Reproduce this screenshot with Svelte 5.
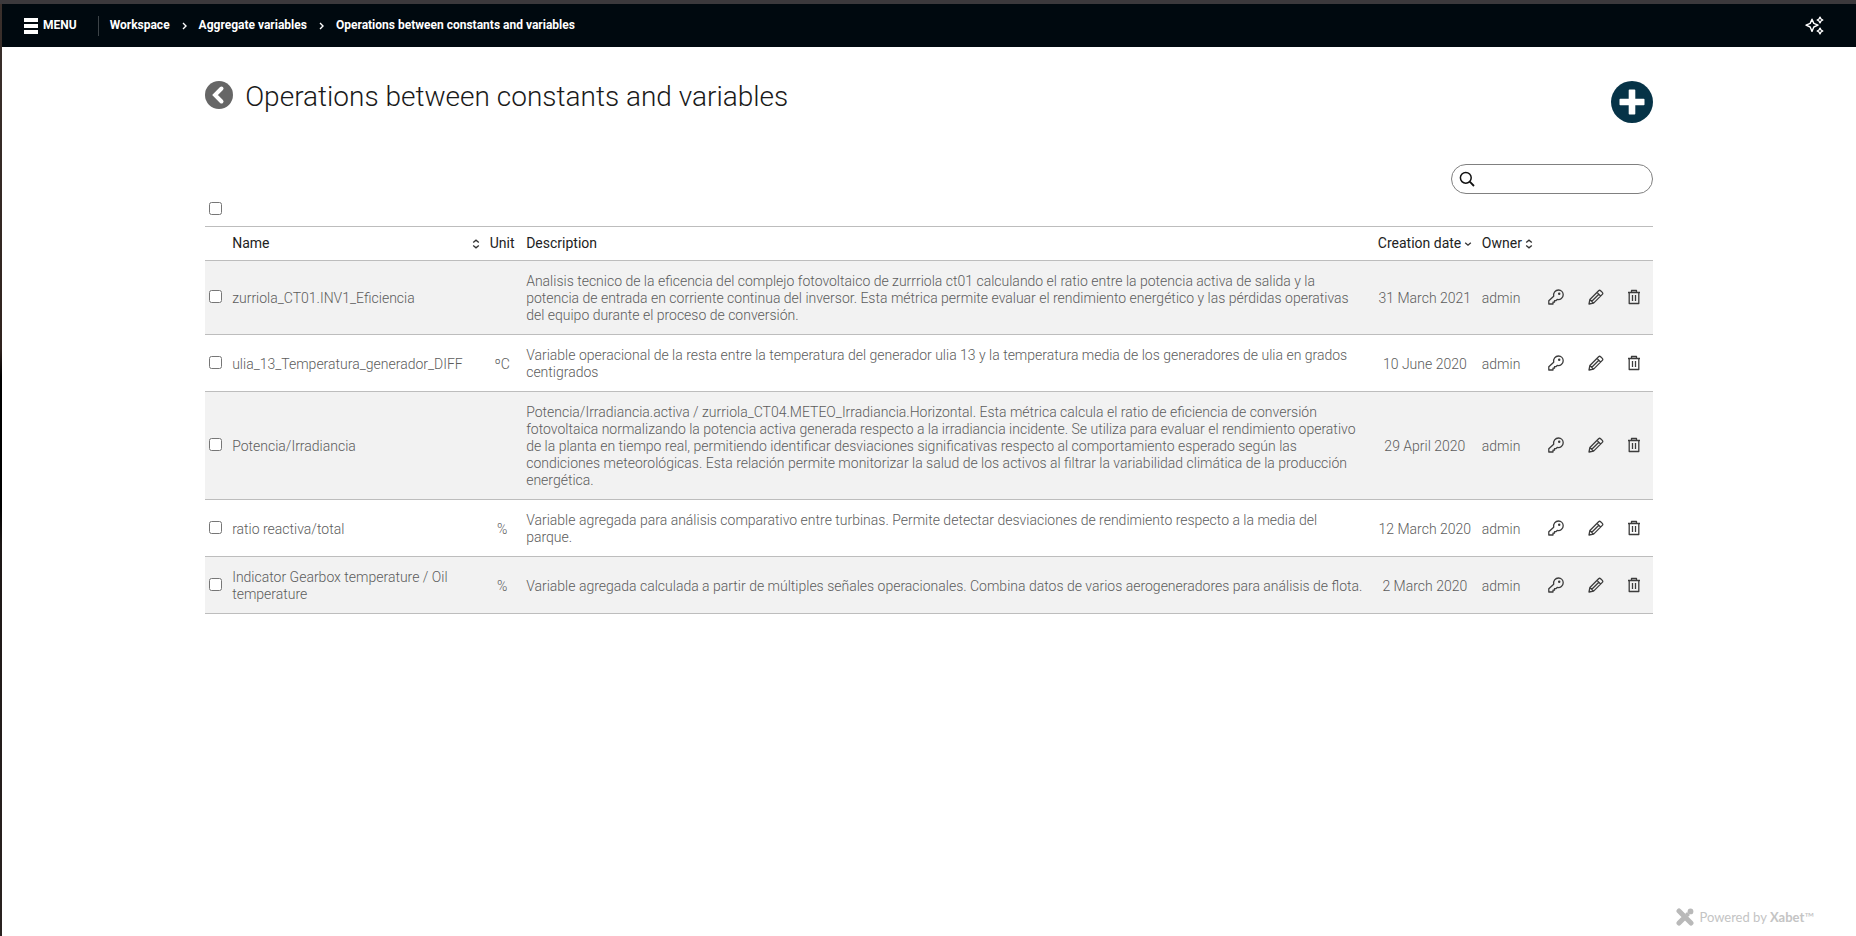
<script>
  const crumbs = ['Workspace', 'Aggregate variables', 'Operations between constants and variables'];
  const rows = [
    {
      name: 'zurriola_CT01.INV1_Eficiencia',
      unit: '',
      description:
        'Analisis tecnico de la eficencia del complejo fotovoltaico de zurrriola ct01 calculando el ratio entre la potencia activa de salida y la potencia de entrada en corriente continua del inversor. Esta métrica permite evaluar el rendimiento energético y las pérdidas operativas del equipo durante el proceso de conversión.',
      date: '31 March 2021',
      owner: 'admin'
    },
    {
      name: 'ulia_13_Temperatura_generador_DIFF',
      unit: 'ºC',
      description:
        'Variable operacional de la resta entre la temperatura del generador ulia 13 y la temperatura media de los generadores de ulia en grados centigrados',
      date: '10 June 2020',
      owner: 'admin'
    },
    {
      name: 'Potencia/Irradiancia',
      unit: '',
      description:
        'Potencia/Irradiancia.activa / zurriola_CT04.METEO_Irradiancia.Horizontal. Esta métrica calcula el ratio de eficiencia de conversión fotovoltaica normalizando la potencia activa generada respecto a la irradiancia incidente. Se utiliza para evaluar el rendimiento operativo de la planta en tiempo real, permitiendo identificar desviaciones significativas respecto al comportamiento esperado según las condiciones meteorológicas. Esta relación permite monitorizar la salud de los activos al filtrar la variabilidad climática de la producción energética.',
      date: '29 April 2020',
      owner: 'admin'
    },
    {
      name: 'ratio reactiva/total',
      unit: '%',
      description:
        'Variable agregada para análisis comparativo entre turbinas. Permite detectar desviaciones de rendimiento respecto a la media del parque.',
      date: '12 March 2020',
      owner: 'admin'
    },
    {
      name: 'Indicator Gearbox temperature / Oil temperature',
      unit: '%',
      description:
        'Variable agregada calculada a partir de múltiples señales operacionales. Combina datos de varios aerogeneradores para análisis de flota.',
      date: '2 March 2020',
      owner: 'admin'
    }
  ];
  let selected = $state(rows.map(() => false));
  let query = $state('');
  let all = $derived(selected.every(Boolean));
  function toggleAll(e) {
    selected = rows.map(() => e.currentTarget.checked);
  }
</script>

{#snippet sorter()}
  <svg class="sort" width="8" height="10" viewBox="0 0 8 10" aria-hidden="true"><path d="M1.2 3.6 4 1.2l2.8 2.4M1.2 6.4 4 8.8l2.8-2.4" /></svg>
{/snippet}

<div class="page">
  <header>
    <button class="menu">
      <svg width="14" height="16" viewBox="0 0 14 16" aria-hidden="true"><path d="M0 0h14v4H0zM0 6h14v4H0zM0 12h14v4H0z" fill="#fff" /></svg>
      MENU
    </button>
    <nav>
      {#each crumbs as crumb, i}
        {#if i > 0}
          <svg width="5" height="8" viewBox="0 0 5 8" aria-hidden="true"><path d="m1 1 3 3-3 3" fill="none" stroke="#fff" stroke-width="1.4" /></svg>
        {/if}
        <a href="#{i}">{crumb}</a>
      {/each}
    </nav>
    <button class="assistant" aria-label="Assistant">
      <svg width="19" height="19" viewBox="0 0 19 19" fill="none" stroke="#fff" stroke-width="1.4" stroke-linejoin="round" aria-hidden="true">
        <path d="M7 3.2 8.8 7.4 13 9.2 8.8 11 7 15.4 5.2 11 1 9.2l4.2-1.8z" />
        <path d="m15 1.2 1 1.8 1.8 1-1.8 1-1 1.8-1-1.8-1.8-1 1.8-1zM15 12.2l1 1.8 1.8 1-1.8 1-1 1.8-1-1.8-1.8-1 1.8-1z" />
      </svg>
    </button>
  </header>

  <main>
    <div class="heading">
      <a class="back" href="#back" aria-label="Back">
        <svg width="28" height="28" viewBox="0 0 28 28" aria-hidden="true"><circle cx="14" cy="14" r="14" fill="#666" /><path d="m16.5 7.500-6.500 6.500 6.500 6.500" fill="none" stroke="#fff" stroke-width="4" stroke-linecap="round" stroke-linejoin="miter" /></svg>
      </a>
      <h1>Operations between constants and variables</h1>
      <button class="add" aria-label="Add">
        <svg width="42" height="42" viewBox="0 0 42 42" aria-hidden="true"><circle cx="21" cy="21" r="21" fill="#063347" /><path d="M18.5 8.500h5q.8 0 .8.8v8.400h8.400q.8 0 .8.8v5q0 .8-.8.8h-8.400v8.400q0 .8-.8.8h-5q-.8 0-.8-.8v-8.400H9.300q-.8 0-.8-.8v-5q0-.8.8-.8h8.400V9.300q0-.8.8-.8z" fill="#fff" /></svg>
      </button>
    </div>

    <label class="search">
      <svg width="16" height="16" viewBox="0 0 16 16" fill="none" stroke="#111" stroke-width="1.5" aria-hidden="true"><circle cx="6.8" cy="6.8" r="5.4" /><path d="m10.700 10.700 4.300 4.300" stroke-width="1.8" /></svg>
      <input type="search" aria-label="Search" bind:value={query} />
    </label>

    <div class="select-all"><input type="checkbox" aria-label="Select all" checked={all} onchange={toggleAll} /></div>

    <table>
      <colgroup>
        <col class="c-check" /><col class="c-name" /><col class="c-unit" /><col /><col class="c-date" /><col class="c-owner" /><col class="c-action" /><col class="c-action" /><col class="c-last" />
      </colgroup>
      <thead>
        <tr>
          <th></th>
          <th><span class="spread">Name {@render sorter()}</span></th>
          <th class="center">Unit</th>
          <th>Description</th>
          <th><span class="inline">Creation date <svg class="sort" width="8" height="6" viewBox="0 0 8 6" aria-hidden="true"><path d="m1.2 1.8 2.8 2.4 2.8-2.4" /></svg></span></th>
          <th><span class="inline">Owner {@render sorter()}</span></th>
          <th></th><th></th><th></th>
        </tr>
      </thead>
      <tbody>
        {#each rows as row, i}
          <tr>
            <td class="check"><input type="checkbox" aria-label="Select {row.name}" bind:checked={selected[i]} /></td>
            <td class="name">{row.name}</td>
            <td class="center">{row.unit}</td>
            <td class="description">{row.description}</td>
            <td class="date">{row.date}</td>
            <td>{row.owner}</td>
            <td class="action">
              <button aria-label="Permissions">
                <svg width="16" height="16" viewBox="0 0 16 16" aria-hidden="true"><path d="M.8 15v-3.200l4.900-4.600C5 3.900 7.300 1 10.500 1c2.700 0 4.700 2 4.700 4.700 0 3.200-2.800 5.400-6 4.700L7.900 11.700H6.500v1.500H5V15z" /><circle cx="11.200" cy="4.800" r=".6" /></svg>
              </button>
            </td>
            <td class="action">
              <button aria-label="Edit">
                <svg width="16" height="16" viewBox="0 0 16 16" aria-hidden="true"><path d="m1 15 .9-4.500 8.700-8.700q1-1 2-.1l1.700 1.700q1 1 0 2l-8.700 8.700zM1.900 10.500l3.700 3.600M9 3.400 12.600 7M3.800 12.200l7-7" /></svg>
              </button>
            </td>
            <td class="action">
              <button aria-label="Delete">
                <svg width="16" height="16" viewBox="0 0 16 16" aria-hidden="true"><path d="M2 3.500h12M5.500 3.500v-2h5v2M3.200 3.500v11h9.600v-11M6.500 6v6M9.500 6v6" /></svg>
              </button>
            </td>
          </tr>
        {/each}
      </tbody>
    </table>
  </main>

  <footer>
    <svg width="18" height="18" viewBox="0 0 18 18" aria-hidden="true"><path d="M3 3l12 12M3 15l5-5" stroke="#b9b9b9" stroke-width="5" stroke-linecap="round" /><path d="m10.500 7.500 2-2" stroke="#b9b9b9" stroke-width="4" /><circle cx="14.500" cy="3.400" r="2.900" fill="#b9b9b9" /></svg>
    <span>Powered by <strong>Xabet</strong>™</span>
  </footer>
</div>

<style>
  :global(body) {
    margin: 0;
    background: #fff;
  }
  .page {
    box-sizing: border-box;
    min-height: 100vh;
    display: flex;
    flex-direction: column;
    border-top: 4px solid #3b393c;
    padding-left: 2px;
    background: linear-gradient(#3a302c, #30231e 37%, #000 40%, #000 54%, #1d1716 58%, #2a2220) left / 2px 100% no-repeat;
    font-family: Roboto, 'Liberation Sans', sans-serif;
    font-size: 14px;
    line-height: 17px;
    color: #5c5c5c;
  }
  button {
    display: inline-flex;
    align-items: center;
    padding: 0;
    border: 0;
    background: none;
    color: inherit;
    font: inherit;
    cursor: pointer;
  }
  svg {
    flex: none;
    display: block;
  }
  header {
    height: 43px;
    display: flex;
    align-items: center;
    padding: 0 32px 0 22px;
    background: #00090f;
    color: #fff;
    font-size: 12px;
    font-weight: 700;
  }
  .menu {
    gap: 5px;
    height: 20px;
    padding-right: 21px;
    border-right: 1px solid #3c4347;
  }
  nav {
    display: flex;
    align-items: center;
    gap: 12px;
    padding-left: 11px;
  }
  nav a {
    color: inherit;
    text-decoration: none;
  }
  .assistant {
    margin-left: auto;
  }
  main {
    flex: 1;
    width: 78vw;
    margin: 0 auto;
  }
  .heading {
    display: flex;
    align-items: flex-start;
    padding-top: 34px;
  }
  h1 {
    margin: 0 0 0 12px;
    font-size: 28px;
    font-weight: 300;
    line-height: 32px;
    color: #1a1a1a;
  }
  .add {
    margin-left: auto;
  }
  .search {
    box-sizing: border-box;
    display: flex;
    align-items: center;
    gap: 6px;
    width: 202px;
    height: 30px;
    margin: 41px 0 0 auto;
    padding: 0 12px 0 7px;
    border: 1px solid #808080;
    border-radius: 15px;
  }
  .search input {
    flex: 1;
    min-width: 0;
    border: 0;
    outline: 0;
    background: none;
    font: inherit;
  }
  input[type='checkbox'] {
    display: block;
    width: 13px;
    height: 13px;
    margin: 0;
  }
  .select-all {
    padding: 8px 0 11px 4px;
  }
  table {
    width: 100%;
    table-layout: fixed;
    border-collapse: separate;
    border-spacing: 0;
    border-top: 1px solid #bdbdbd;
  }
  .c-check { width: 27px; }
  .c-name { width: 252px; }
  .c-unit { width: 36px; }
  .c-date { width: 104px; }
  .c-owner { width: 54px; }
  .c-action { width: 40px; }
  .c-last { width: 37px; }
  th,
  td {
    padding: 12px 0 10px;
    border-bottom: 1px solid #bdbdbd;
    text-align: left;
    vertical-align: middle;
    font-weight: 300;
  }
  th {
    padding: 8px 0;
    font-weight: 400;
    color: #222;
    white-space: nowrap;
  }
  td:nth-child(4),
  th:nth-child(4) {
    padding-left: 6px;
  }
  tbody tr:nth-child(odd) {
    background: #f2f2f2;
  }
  .spread,
  .inline {
    display: flex;
    align-items: center;
    gap: 3px;
  }
  .spread {
    justify-content: space-between;
    padding-right: 4px;
  }
  .sort {
    fill: none;
    stroke: #333;
    stroke-width: 1.3;
  }
  .check {
    padding: 10px 0 12px 4px;
  }
  .center {
    text-align: center;
  }
  .name {
    padding-right: 12px;
  }
  .description {
    padding-right: 14px;
  }
  .date {
    padding-right: 10px;
    text-align: center;
    white-space: nowrap;
  }
  .action {
    padding: 11px 0;
    text-align: center;
  }
  .action button {
    vertical-align: top;
  }
  .action svg {
    fill: none;
    stroke: #3c3c3c;
    stroke-width: 1.3;
    stroke-linejoin: round;
  }
  footer {
    display: flex;
    justify-content: flex-end;
    align-items: center;
    gap: 5px;
    padding: 0 42px 10px 0;
    font-family: Lato, sans-serif;
    font-size: 13px;
    color: #c4c4c4;
  }
</style>
